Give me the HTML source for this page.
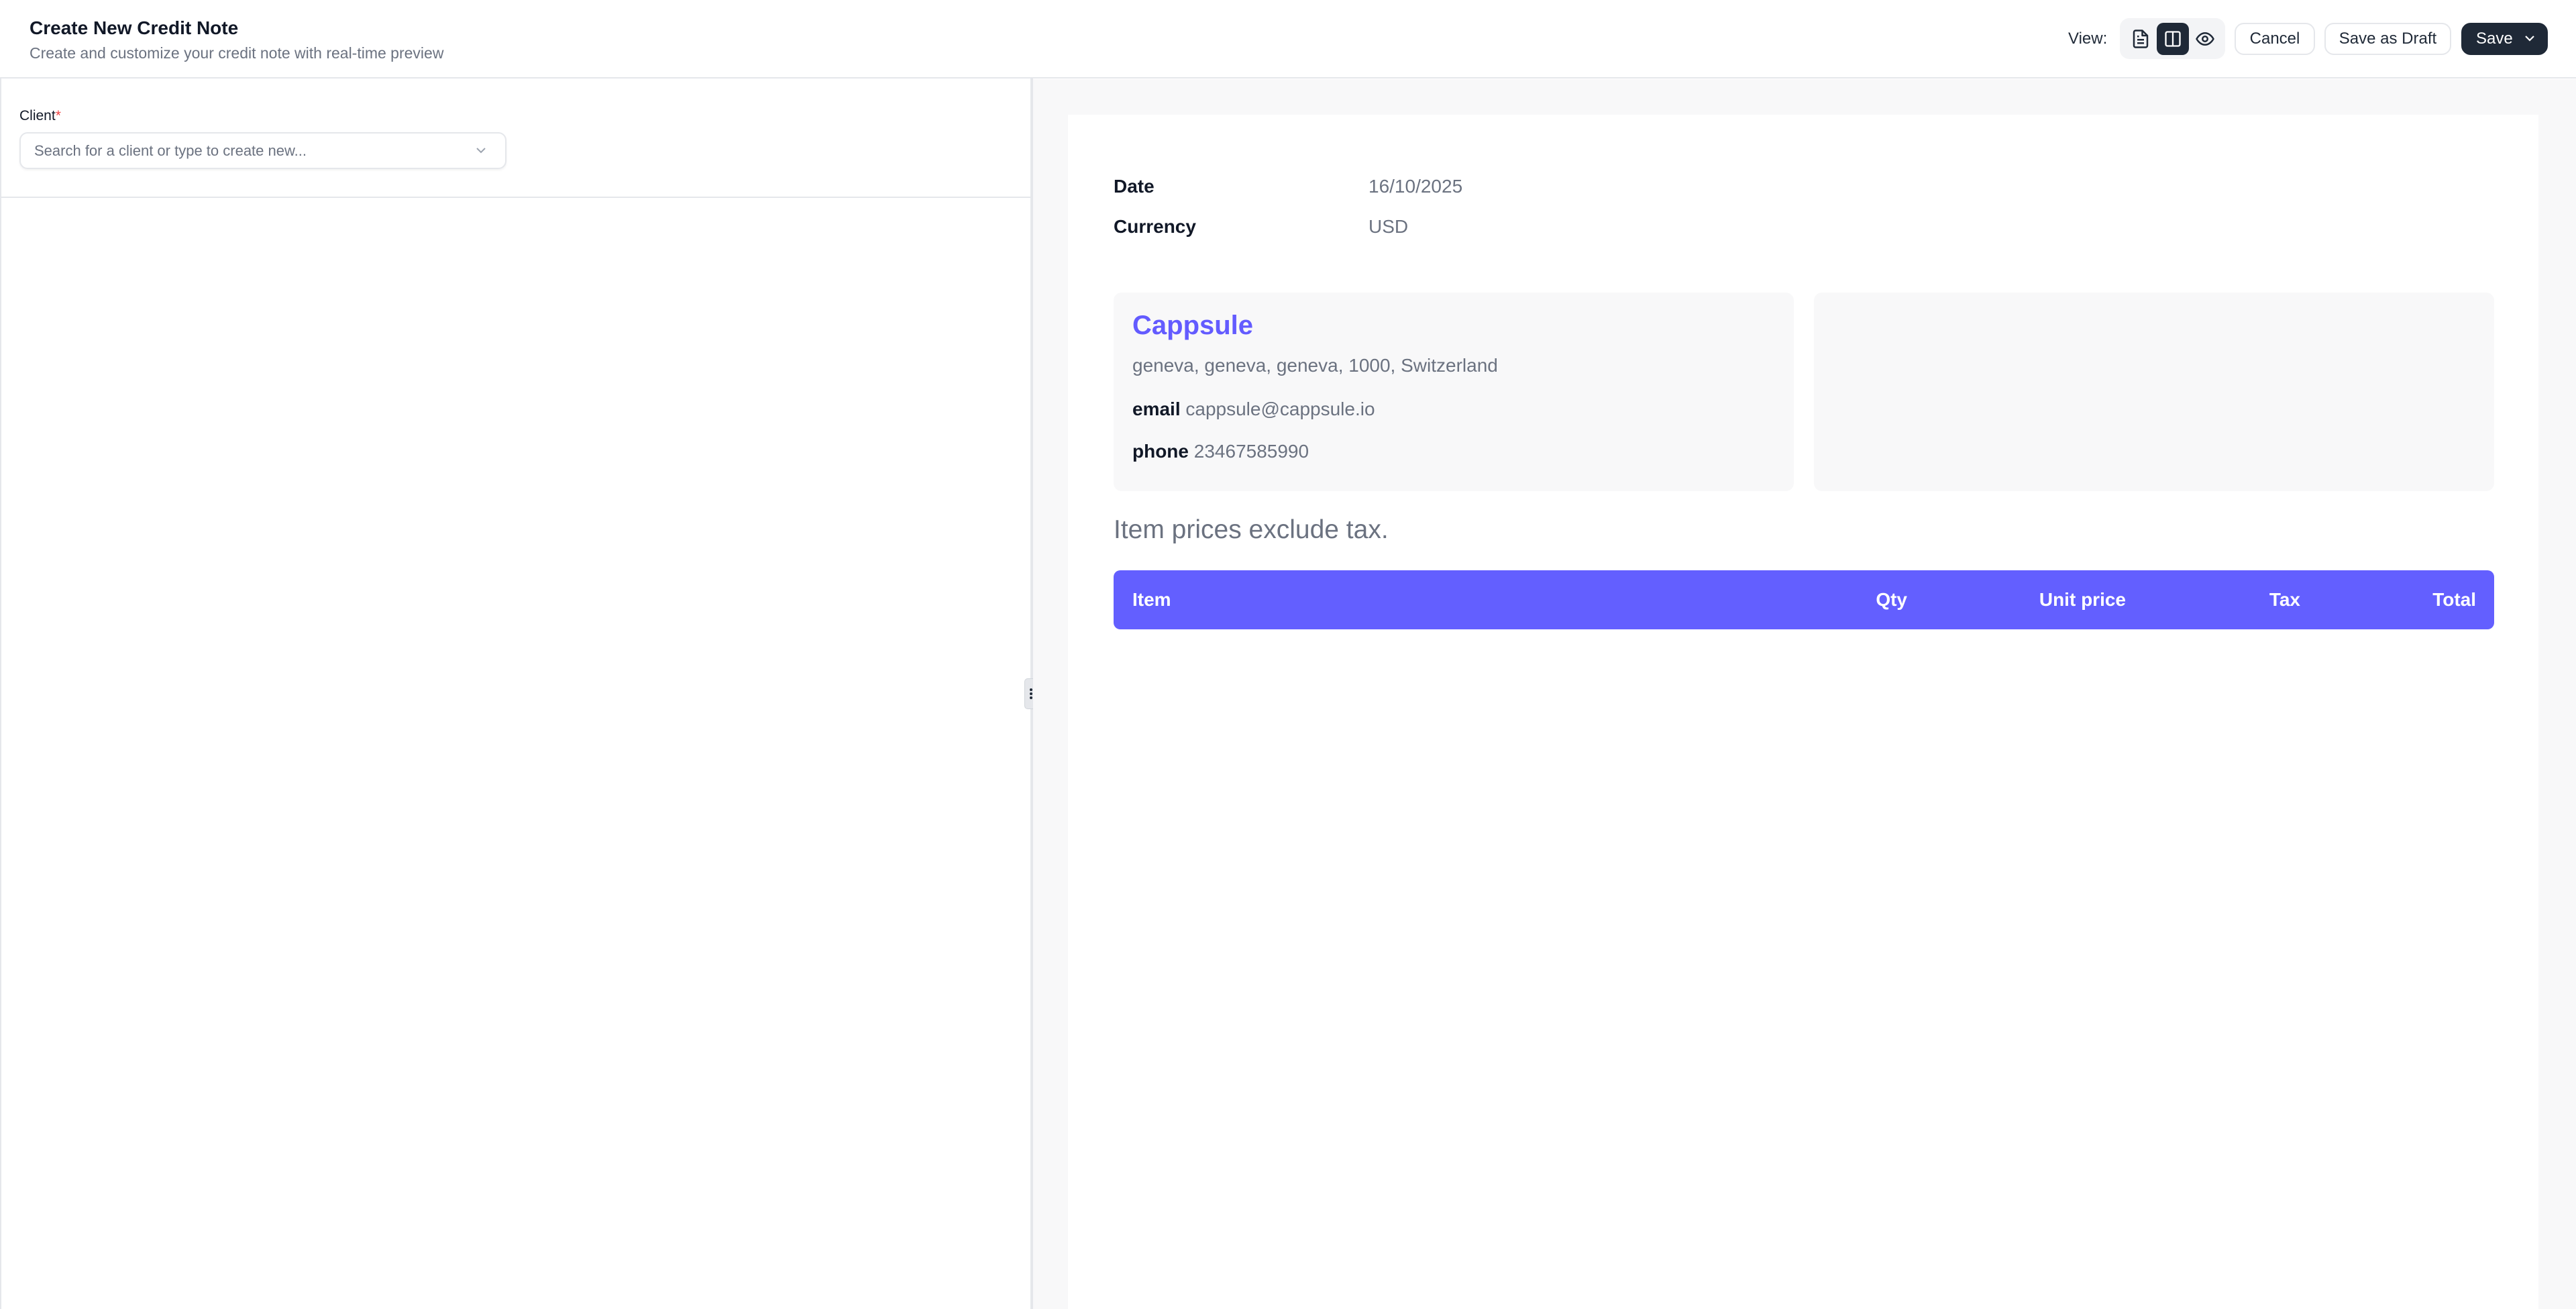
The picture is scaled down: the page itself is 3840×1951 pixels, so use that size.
<!DOCTYPE html>
<html><head><meta charset="utf-8"><style>
*{box-sizing:border-box;margin:0;padding:0}
body{width:3840px;height:1951px;overflow:hidden;background:#fff;font-family:"Liberation Sans",sans-serif;position:relative;color:#1f2937}
.a{position:absolute}
.btn{position:absolute;border:2px solid #e5e7eb;border-radius:14px;background:#fff;font-size:24px;color:#1f2937;display:flex;align-items:center;justify-content:center;font-weight:500}
.lbl{font-size:28px;font-weight:bold;color:#111827}
.val{font-size:28px;color:#6b7280}
.th{position:absolute;top:850px;height:88px;line-height:88px;color:#fff;font-weight:bold;font-size:28px}
</style></head><body>
<div class="a" style="left:0;top:0;width:3840px;height:117px;border-bottom:2px solid #e5e7eb"></div>
<div class="a" style="left:44px;top:26px;font-size:28px;font-weight:bold;color:#111827">Create New Credit Note</div>
<div class="a" style="left:44px;top:66px;font-size:23px;color:#6b7280">Create and customize your credit note with real-time preview</div>

<div class="a" style="left:3083px;top:44px;font-size:24px;font-weight:500;color:#1f2937">View:</div>
<div class="a" style="left:3160px;top:27px;width:157px;height:61px;background:#f3f4f6;border-radius:14px"></div>
<svg class="a" style="left:3176px;top:42px" width="30" height="32" viewBox="0 0 24 24" fill="none" stroke="#1f2937" stroke-width="2" stroke-linejoin="round"><path d="M14 2H6a2 2 0 0 0-2 2v16a2 2 0 0 0 2 2h12a2 2 0 0 0 2-2V8z"/><path d="M14 2v6h6M8 13h8M8 17h8M8 9h2"/></svg>
<div class="a" style="left:3215px;top:34px;width:48px;height:48px;background:#1f2937;border-radius:10px"></div>
<svg class="a" style="left:3225px;top:44px" width="28" height="28" viewBox="0 0 24 24" fill="none" stroke="#fff" stroke-width="2"><rect x="3" y="3" width="18" height="18" rx="2"/><path d="M12 3v18"/></svg>
<svg class="a" style="left:3272px;top:43px" width="30" height="30" viewBox="0 0 24 24" fill="none" stroke="#1f2937" stroke-width="2"><path d="M2 12s3.5-7 10-7 10 7 10 7-3.5 7-10 7S2 12 2 12z"/><circle cx="12" cy="12" r="3"/></svg>

<div class="btn" style="left:3331px;top:34px;width:120px;height:48px">Cancel</div>
<div class="btn" style="left:3465px;top:34px;width:189px;height:48px">Save as Draft</div>
<div class="btn" style="left:3669px;top:34px;width:129px;height:48px;background:#1f2937;border-color:#1f2937;color:#fff;justify-content:flex-start;padding-left:20px">Save</div>
<svg class="a" style="left:3762px;top:50px" width="18" height="14" viewBox="0 0 18 14" fill="none" stroke="#fff" stroke-width="2.2"><path d="M3 4l6 6 6-6"/></svg>

<div class="a" style="left:0;top:117px;width:2px;height:1834px;background:#e5e7eb"></div>
<div class="a" style="left:29px;top:161px;font-size:21px;font-weight:500;color:#111827">Client<span style="color:#ef4444">*</span></div>
<div class="a" style="left:29px;top:197px;width:726px;height:55px;border:2px solid #e5e7eb;border-radius:12px;box-shadow:0 2px 3px rgba(0,0,0,.05)"></div>
<div class="a" style="left:51px;top:212px;font-size:22px;color:#6b7280">Search for a client or type to create new...</div>
<svg class="a" style="left:708px;top:217px" width="18" height="14" viewBox="0 0 18 14" fill="none" stroke="#9ca3af" stroke-width="2"><path d="M3 4l6 6 6-6"/></svg>
<div class="a" style="left:0;top:293px;width:1538px;height:2px;background:#e5e7eb"></div>

<div class="a" style="left:1536px;top:117px;width:4px;height:1834px;background:#e5e7eb"></div>
<div class="a" style="left:1527px;top:1011px;width:24px;height:46px;background:#e5e7eb;border:1px solid #d1d5db;border-radius:5px"></div>
<svg class="a" style="left:1533px;top:1024px" width="14" height="20" viewBox="0 0 14 20" fill="#1f2937"><circle cx="4" cy="4" r="2"/><circle cx="10" cy="4" r="2"/><circle cx="4" cy="10" r="2"/><circle cx="10" cy="10" r="2"/><circle cx="4" cy="16" r="2"/><circle cx="10" cy="16" r="2"/></svg>

<div class="a" style="left:1540px;top:118px;width:2300px;height:1833px;background:#f8f8f9"></div>
<div class="a" style="left:1592px;top:171px;width:2192px;height:1780px;background:#fff"></div>
<div class="a lbl" style="left:1660px;top:262px">Date</div>
<div class="a val" style="left:2040px;top:262px">16/10/2025</div>
<div class="a lbl" style="left:1660px;top:322px">Currency</div>
<div class="a val" style="left:2040px;top:322px">USD</div>

<div class="a" style="left:1660px;top:436px;width:1014px;height:296px;background:#f8f8f9;border-radius:12px"></div>
<div class="a" style="left:2704px;top:436px;width:1014px;height:296px;background:#f8f8f9;border-radius:12px"></div>
<div class="a" style="left:1688px;top:463px;font-size:40px;font-weight:bold;color:#635bff">Cappsule</div>
<div class="a val" style="left:1688px;top:529px;font-size:28px">geneva, geneva, geneva, 1000, Switzerland</div>
<div class="a" style="left:1688px;top:594px;font-size:28px"><b style="color:#111827">email</b>&nbsp;<span style="color:#6b7280">cappsule@cappsule.io</span></div>
<div class="a" style="left:1688px;top:657px;font-size:28px"><b style="color:#111827">phone</b>&nbsp;<span style="color:#6b7280">23467585990</span></div>

<div class="a" style="left:1660px;top:768px;font-size:39px;color:#6b7280">Item prices exclude tax.</div>
<div class="a" style="left:1660px;top:850px;width:2058px;height:88px;background:#635fff;border-radius:10px"></div>
<div class="th" style="left:1688px">Item</div>
<div class="th" style="right:997px">Qty</div>
<div class="th" style="right:671px">Unit price</div>
<div class="th" style="right:411px">Tax</div>
<div class="th" style="right:149px">Total</div>
</body></html>
